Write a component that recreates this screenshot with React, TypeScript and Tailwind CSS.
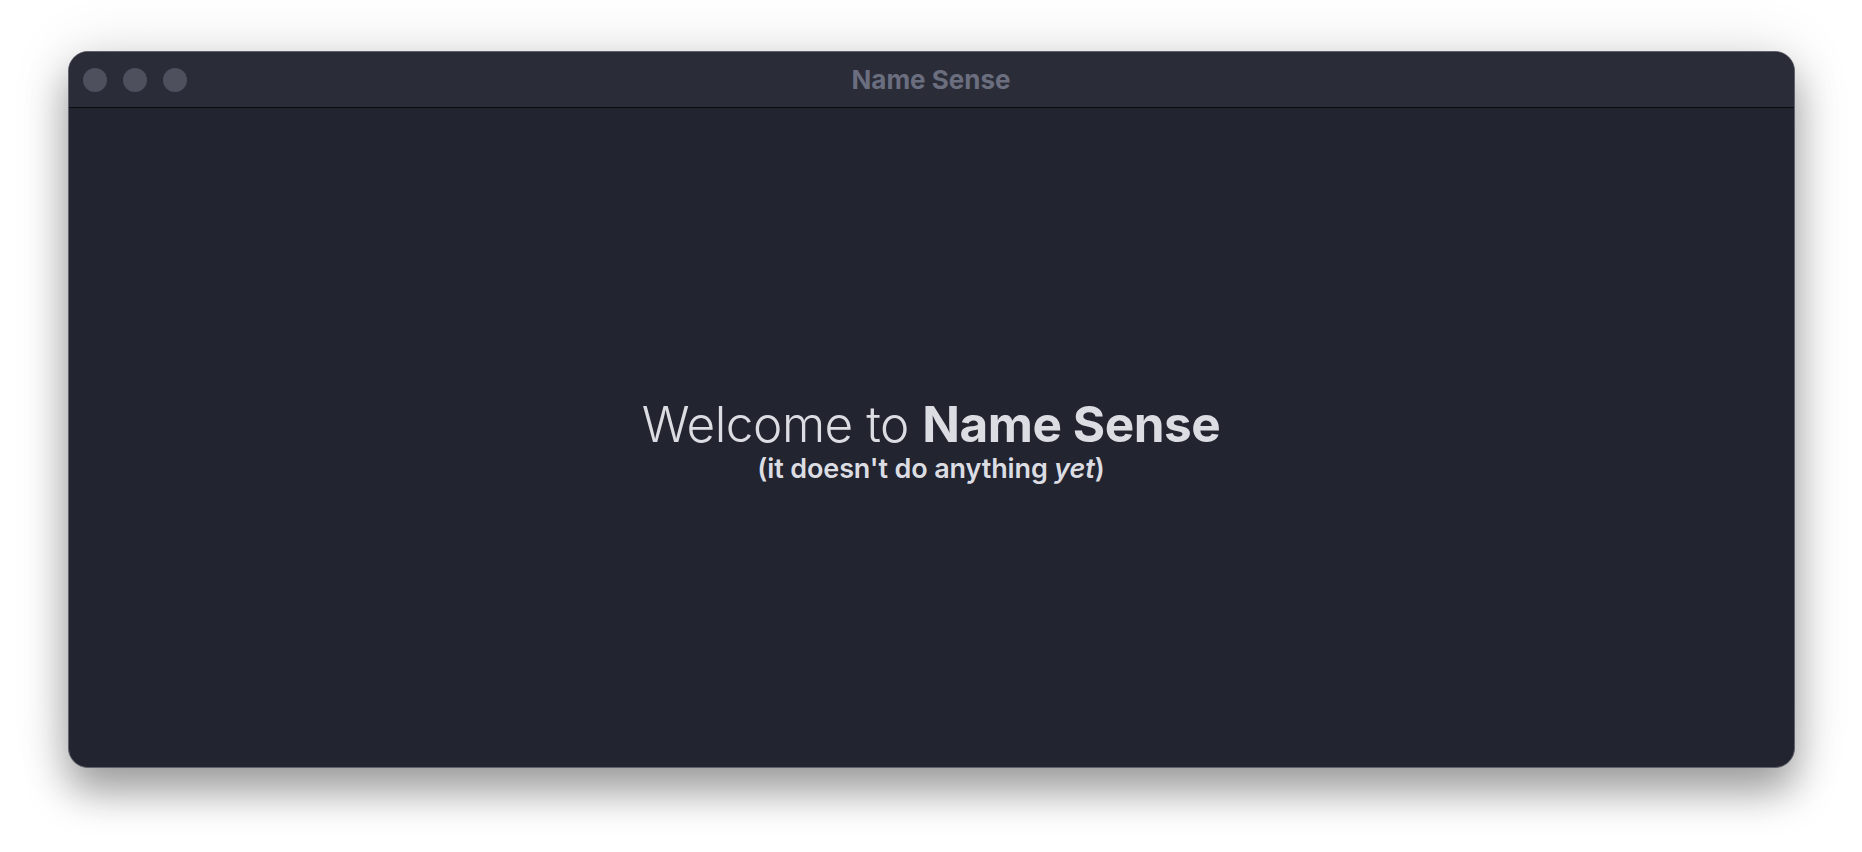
import React from 'react';

const TrafficLight = () => <span className="block h-6 w-6 rounded-full bg-[#4e505e]" />;

export default function App() {
  return (
    <div className="flex h-[852px] w-full justify-center bg-white pt-[51px] font-['Inter','Noto_Sans',sans-serif]">
      <div className="flex h-[717px] w-[1727px] flex-col overflow-hidden rounded-[20px] border-[1.5px] border-[#60626c] bg-[#222430] shadow-[0_24px_40px_rgba(0,0,0,0.35),0_0_60px_rgba(0,0,0,0.12)]">
        <div className="relative flex h-[56px] shrink-0 items-center border-b border-[#0b0c10] bg-[#2a2c38] px-[14px]">
          <div className="flex gap-4">
            <TrafficLight />
            <TrafficLight />
            <TrafficLight />
          </div>
          <div className="absolute inset-0 flex items-center justify-center text-[26px] font-bold text-[#6b6e7e]">
            Name Sense
          </div>
        </div>
        <div className="flex flex-1 flex-col items-center justify-center pt-[4px] text-[#dcdde2]">
          <h1 className="text-[49.5px] leading-[58px] font-light tracking-[-0.01em]">
            Welcome to <span className="font-bold">Name Sense</span>
          </h1>
          <p className="text-[27px] leading-[32px] font-semibold tracking-[-0.005em]">
            (it doesn't do anything <em className="italic">yet</em>)
          </p>
        </div>
      </div>
    </div>
  );
}
